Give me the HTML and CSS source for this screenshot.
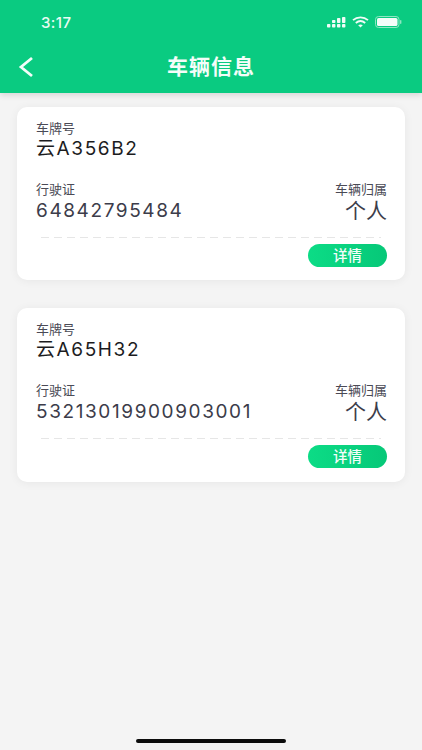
FILE: index.html
```html
<!DOCTYPE html>
<html lang="zh-CN">
  <head>
    <meta charset="UTF-8" />
    <meta name="viewport" content="width=device-width, initial-scale=1.0" />
    <title>车辆信息</title>
    <link rel="stylesheet" href="styles.css">
  </head>
  <body>
    <div class="page">
      <header class="header">
        <div class="status-bar">
          <span class="time">3:17</span>
          <div class="status-icons">
            <svg class="signal" width="19" height="11" viewBox="0 0 19 11" fill="#f0fcf7">
              <rect x="0" y="7" width="3.4" height="3.6" rx="0.8" />
              <rect x="5" y="7" width="3.4" height="3.6" rx="0.8" />
              <rect x="5" y="3" width="3.4" height="3" rx="0.8" />
              <rect x="10" y="7" width="3.4" height="3.6" rx="0.8" />
              <rect x="10" y="1" width="3.4" height="5" rx="0.8" />
              <rect x="15" y="7" width="3.4" height="3.6" rx="0.8" />
              <rect x="15" y="0" width="3.4" height="6" rx="0.8" />
            </svg>
            <svg class="wifi" width="17" height="12" viewBox="0 0 17 12" fill="none" stroke="#f0fcf7" stroke-width="1.8">
              <path d="M1 4.2 C5.2 0.4 11.8 0.4 16 4.2" />
              <path d="M3.8 7 C6.6 4.6 10.4 4.6 13.2 7" />
              <path d="M8.5 11.5 L6.2 9.2 C7.6 8.2 9.4 8.2 10.8 9.2 Z" fill="#f0fcf7" stroke="none" />
            </svg>
            <svg class="battery" width="27" height="12" viewBox="0 0 27 12">
              <rect x="0.5" y="0.5" width="23.5" height="11" rx="3" fill="none" stroke="#8fe6c2" />
              <rect x="2" y="2" width="20.5" height="8" rx="1.6" fill="#f4fdf9" />
              <rect x="25" y="4" width="1.4" height="4" rx="0.7" fill="#8fe6c2" />
            </svg>
          </div>
        </div>
        <div class="nav-bar">
          <svg class="back" width="16" height="22" viewBox="0 0 16 22" fill="none" stroke="#f4fdf9" stroke-width="2.8">
            <path d="M14 2 L3 11 L14 20" />
          </svg>
          <h1 class="title">车辆信息</h1>
        </div>
      </header>

      <main class="list">
        <section class="card">
          <div class="label">车牌号</div>
          <div class="plate">云A356B2</div>
          <div class="row">
            <div>
              <div class="label">行驶证</div>
              <div class="value">64842795484</div>
            </div>
            <div class="right">
              <div class="label">车辆归属</div>
              <div class="value owner">个人</div>
            </div>
          </div>
          <div class="divider"></div>
          <div class="actions"><a class="btn">详情</a></div>
        </section>

        <section class="card">
          <div class="label">车牌号</div>
          <div class="plate">云A65H32</div>
          <div class="row">
            <div>
              <div class="label">行驶证</div>
              <div class="value">53213019900903001</div>
            </div>
            <div class="right">
              <div class="label">车辆归属</div>
              <div class="value owner">个人</div>
            </div>
          </div>
          <div class="divider"></div>
          <div class="actions"><a class="btn">详情</a></div>
        </section>
      </main>

      <div class="home-indicator"></div>
    </div>
  </body>
</html>
```

FILE: styles.css
```css
* {
  box-sizing: border-box;
}
html, body {
  margin: 0;
  padding: 0;
}
body {
  font-family: Inter, "Noto Sans CJK SC", sans-serif;
  background-color: #f4f4f4;
}
.page {
  position: relative;
  height: 750px;
  overflow: hidden;
  background-color: #f4f4f4;
}
.header {
  height: 93px;
  background-color: #0acb81;
  color: #fff;
  box-shadow: 0 2px 6px rgba(0, 0, 0, 0.13);
}
.status-bar {
  height: 44px;
  display: flex;
  align-items: center;
  justify-content: space-between;
  padding: 0 20px 0 41px;
}
.time {
  font-size: 15px;
  font-weight: 500;
  letter-spacing: 0.4px;
  color: #e9fbf3;
}
.status-icons {
  display: flex;
  align-items: center;
  gap: 6px;
}
.nav-bar {
  position: relative;
  height: 44px;
  padding-bottom: 2px;
  display: flex;
  align-items: center;
  justify-content: center;
}
.back {
  position: absolute;
  left: 18px;
  top: 12px;
}
.title {
  margin: 0;
  font-size: 21px;
  font-weight: bold;
  letter-spacing: 1px;
  color: #f4fdf9;
}
.list {
  display: flex;
  flex-direction: column;
  gap: 28px;
  padding: 13.5px 17px 0;
}
.card {
  height: 173.5px;
  padding: 14px 18px 0 19px;
  background-color: #fff;
  border-radius: 10px;
  box-shadow: 0 1px 10px rgba(0, 0, 0, 0.06);
}
.label {
  font-size: 13px;
  line-height: 15px;
  color: #4a4a55;
}
.plate {
  margin-top: 2px;
  font-size: 19px;
  line-height: 22px;
  letter-spacing: 1.6px;
  color: #1c1c1e;
}
.row {
  display: flex;
  justify-content: space-between;
  margin-top: 22px;
}
.right {
  text-align: right;
}
.value {
  margin-top: 2px;
  font-size: 19px;
  line-height: 24px;
  letter-spacing: 1.6px;
  color: #3c3c4a;
}
.owner {
  font-size: 21px;
  letter-spacing: 0;
}
.divider {
  height: 1px;
  margin: 14px 6px 0 5px;
  background: repeating-linear-gradient(90deg, #e6e6e6 0 8px, transparent 8px 13px);
}
.actions {
  display: flex;
  justify-content: flex-end;
  margin-top: 6px;
}
.btn {
  width: 79px;
  height: 23px;
  border-radius: 12px;
  background: linear-gradient(90deg, #0cdc86, #06c878);
  color: #f4fdf9;
  font-size: 14.5px;
  font-weight: 500;
  line-height: 23px;
  text-align: center;
}
.home-indicator {
  position: absolute;
  left: 136px;
  bottom: 7px;
  width: 150px;
  height: 4px;
  border-radius: 2px;
  background-color: #0c0c0c;
}
```
